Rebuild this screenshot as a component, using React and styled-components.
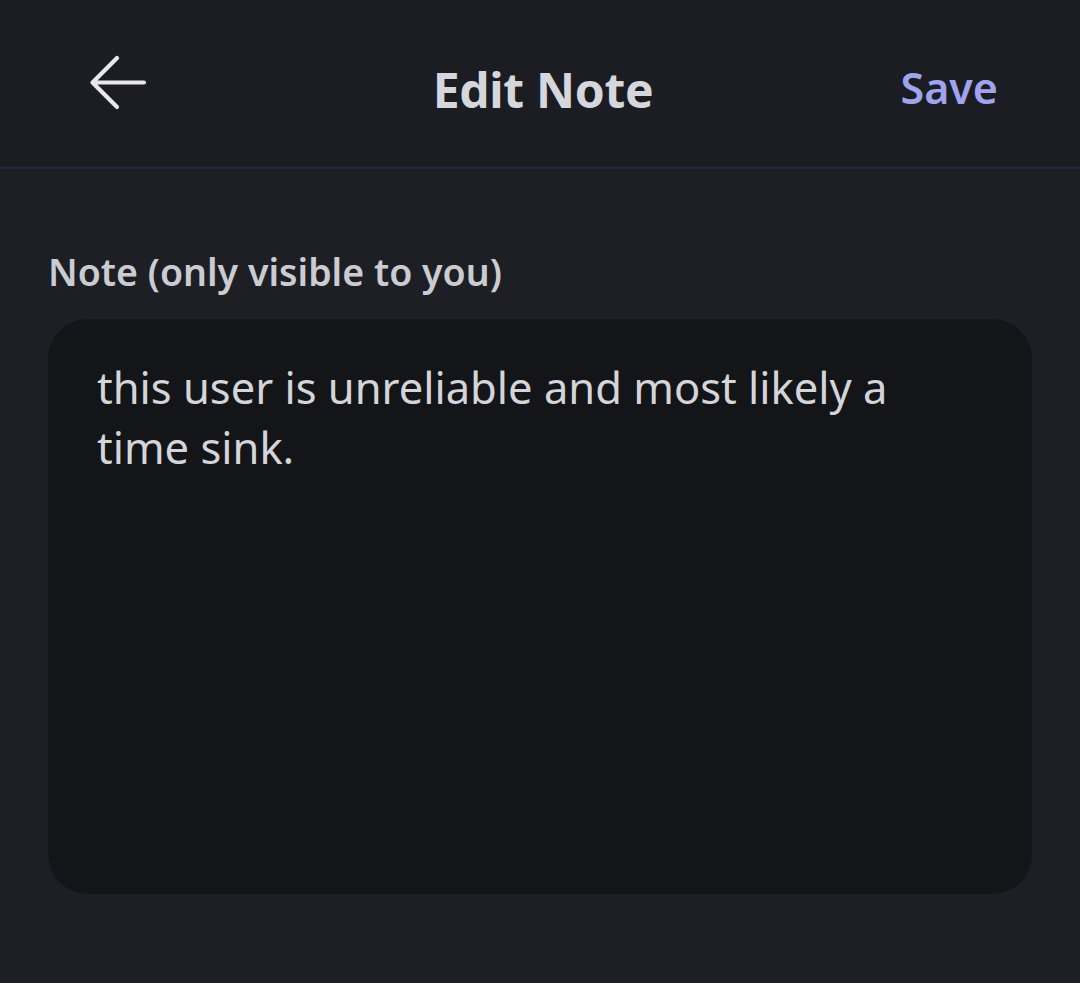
import React from "react"
import styled, { createGlobalStyle } from "styled-components"

const Global = createGlobalStyle`
html, body {
  margin: 0;
  padding: 0;
  background: #1e1f24;
}
* { box-sizing: border-box; }
`;

const App = () => {
    return (
        <Page>
            <Global />
            <Header>
                <BackButton aria-label="Back">
                    <svg width="60" height="60" viewBox="0 0 60 60" fill="none">
                        <path d="M56 29.5H6M29 5L4.5 29.5L29 54" stroke="#e8e8ec" strokeWidth="4.2" strokeLinecap="round" strokeLinejoin="round" />
                    </svg>
                </BackButton>
                <Title>Edit Note</Title>
                <SaveButton>Save</SaveButton>
            </Header>
            <Body>
                <Label>Note (only visible to you)</Label>
                <NoteBox>
                    this user is unreliable and most likely a time sink.
                </NoteBox>
            </Body>
        </Page>
    )
};

export default App;

const Page = styled.div`
width: 1080px;
height: 983px;
background-color: #1e1f24;
font-family: "Noto Sans", "Open Sans", sans-serif;
display: flex;
flex-direction: column;
`;
const Header = styled.div`
height: 169px;
background-color: #1c1d22;
border-bottom: 2px solid #26273a;
display: grid;
grid-template-columns: 1fr auto 1fr;
align-items: center;
padding: 12px 82px 0 88px;
`;
const BackButton = styled.div`
display: flex;
align-items: center;
justify-self: start;
margin-bottom: 14px;
`;
const Title = styled.div`
color: #d6d7dc;
font-size: 48px;
font-weight: 700;
letter-spacing: -0.3px;
`;
const SaveButton = styled.div`
justify-self: end;
color: #a0a4ec;
font-size: 43px;
font-weight: 600;
margin-bottom: 4px;
`;
const Body = styled.div`
padding: 78px 48px 0 48px;
display: flex;
flex-direction: column;
`;
const Label = styled.div`
color: #cbccd2;
font-size: 37.5px;
font-weight: 600;
line-height: 50px;
margin-bottom: 22px;
`;
const NoteBox = styled.div`
height: 575px;
background-color: #141519;
border-radius: 40px;
padding: 38px 100px 0 49px;
color: #d4d5da;
font-size: 43.5px;
line-height: 60px;
`;
